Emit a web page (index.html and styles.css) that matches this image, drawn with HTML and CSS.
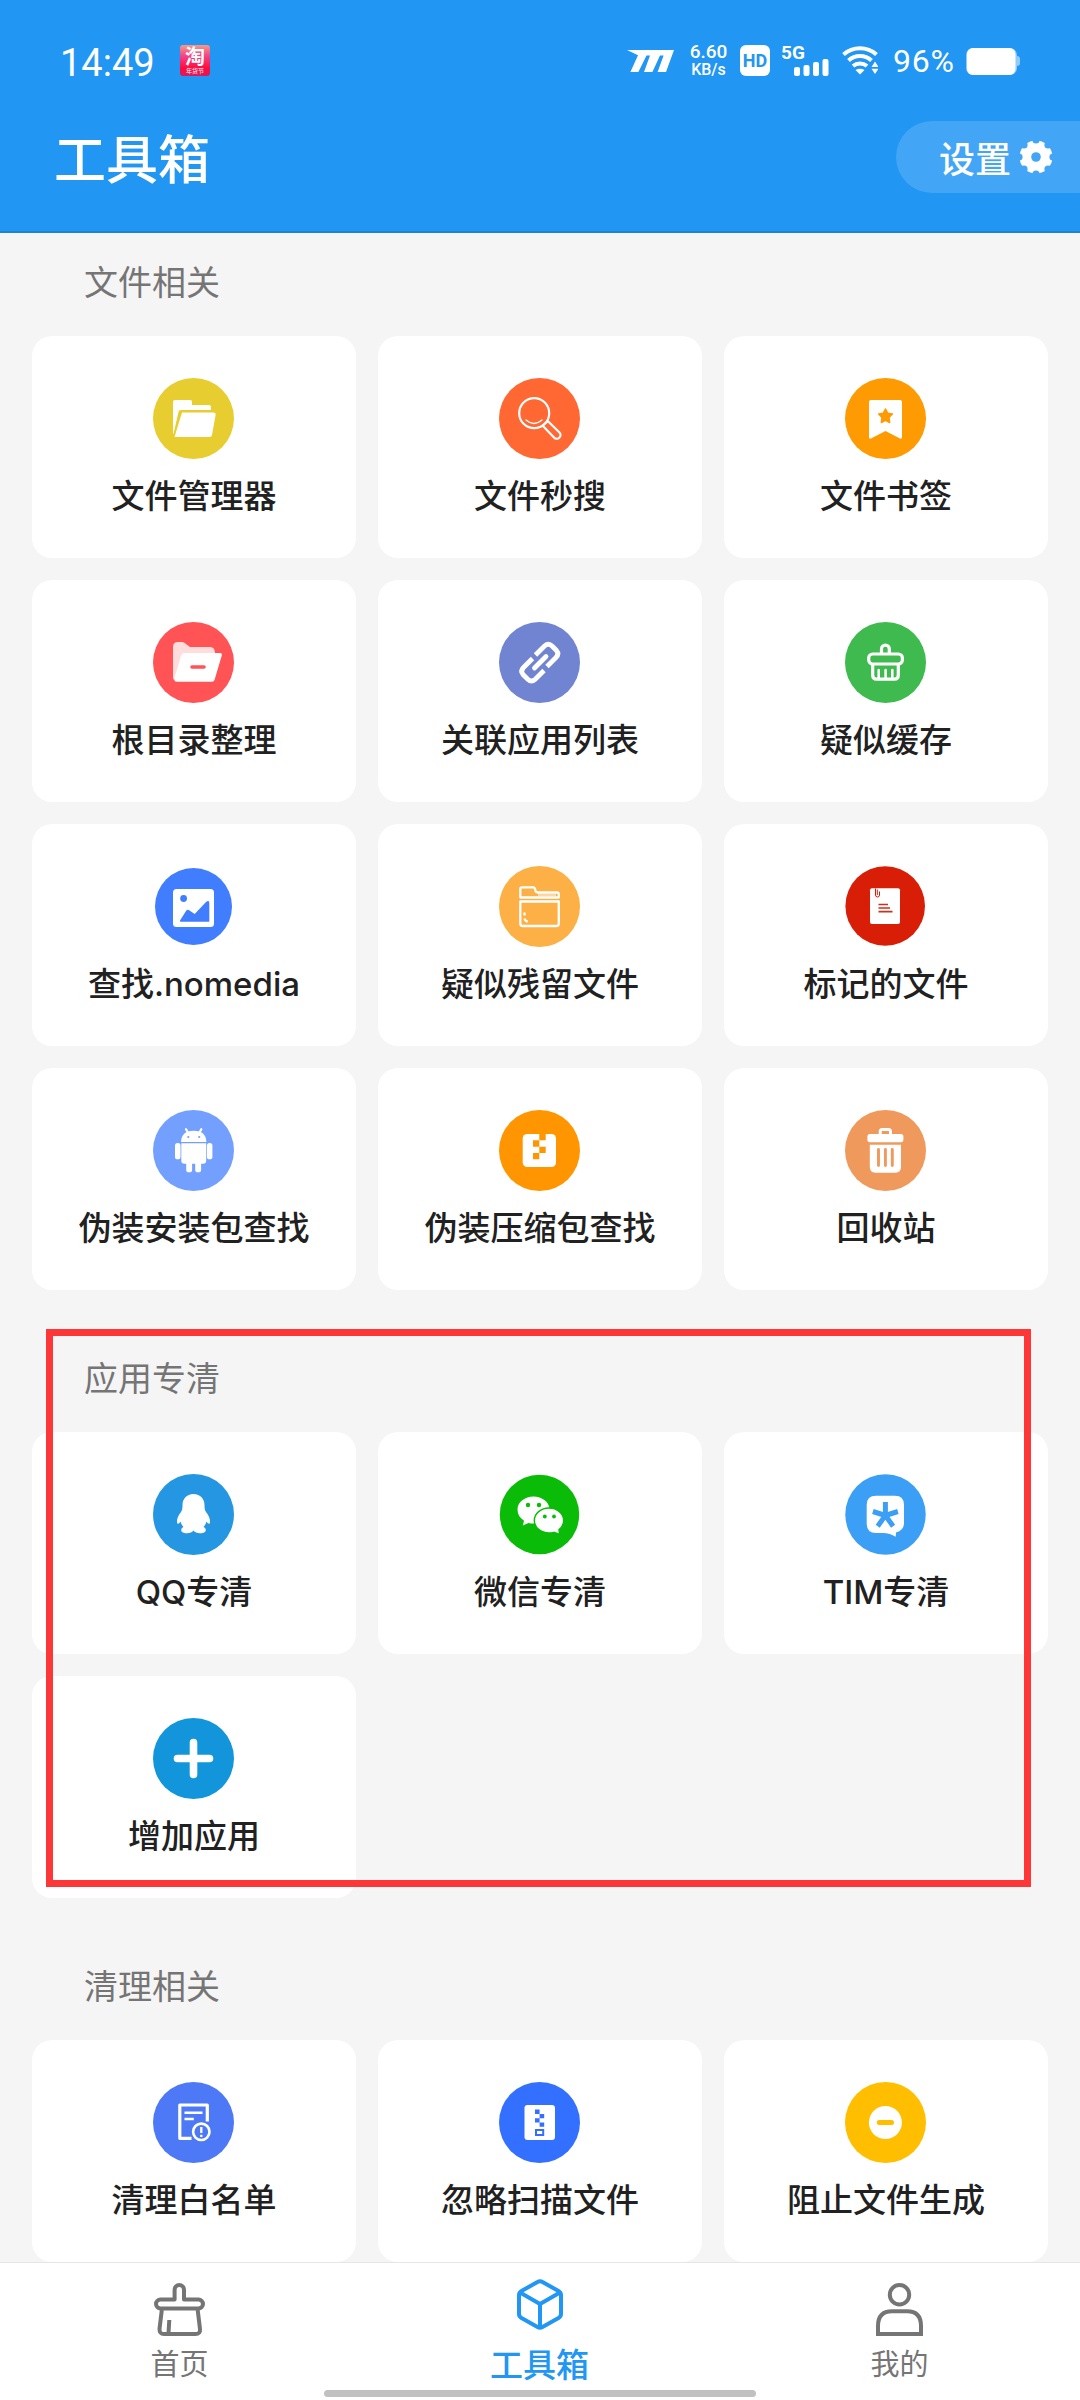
FILE: index.html
```html
<!DOCTYPE html>
<html lang="zh-CN">
  <head>
    <meta charset="UTF-8" />
    <meta name="viewport" content="width=device-width, initial-scale=1.0" />
    <title>工具箱</title>
    <link rel="stylesheet" href="styles.css">
  </head>
  <body>
    <header class="header">
      <div class="status">
        <span class="time">14:49</span>
        <span class="notice">
          <b>淘</b>
          <small>年货节</small>
        </span>
        <svg class="brand" width="47" height="22" viewBox="0 0 47 22">
          <path fill="#fff" d="M0 0H47L39 22H30.6L36.6 5.5H33L25.4 22H17L23 5.5H19.5L11.4 22H3.4L11 5.2Z" />
        </svg>
        <span class="speed"><span>6.60</span><span>KB/s</span></span>
        <span class="hd">HD</span>
        <span class="signal">
          <span class="net">5G</span>
          <svg width="35" height="17" viewBox="0 0 35 17">
            <g fill="#fff">
              <rect x="0" y="8" width="6" height="9" rx="2" />
              <rect x="9.5" y="6" width="6" height="11" rx="2" />
              <rect x="19" y="3" width="6" height="14" rx="2" />
              <rect x="28.5" y="0" width="6" height="17" rx="2" />
            </g>
          </svg>
        </span>
        <svg class="wifi" width="36" height="29" viewBox="0 0 36 29">
          <g fill="none" stroke="#fff" stroke-width="4">
            <path d="M1.5 8.5A25 25 0 0 1 34.5 8.5" />
            <path d="M6.5 14.5A17 17 0 0 1 29.5 14.5" />
            <path d="M11 20A11 11 0 0 1 25 20" />
          </g>
          <path fill="#fff" d="M13.5 24Q18 21.5 22.5 24L18 28.5Z" />
          <path fill="#2196f3" d="M28 16H36V29H28Z" />
          <path fill="#fff" d="M29.5 21L33 15.5L36.5 21ZM29.5 22.8L33 28L36.5 22.8Z" />
        </svg>
        <span class="percent">96%</span>
        <svg class="battery" width="54" height="27" viewBox="0 0 54 27">
          <rect x="47" y="8" width="7" height="10" rx="3" fill="#90cbf9" />
          <rect width="51" height="27" rx="7" fill="#90cbf9" />
          <rect x="1" width="48.5" height="27" rx="6" fill="#fff" />
        </svg>
      </div>
      <div class="title-bar">
        <h1>工具箱</h1>
        <button class="settings">
          设置
          <svg width="34" height="34" viewBox="0 0 34 34">
            <circle cx="17" cy="17" r="16.5" fill="#fff" />
            <g fill="#42a5f5">
              <circle cx="17" cy="17" r="4.8" />
              <circle cx="17" cy="0" r="3.6" />
              <circle cx="29" cy="5" r="3.6" />
              <circle cx="34" cy="17" r="3.6" />
              <circle cx="29" cy="29" r="3.6" />
              <circle cx="17" cy="34" r="3.6" />
              <circle cx="5" cy="29" r="3.6" />
              <circle cx="0" cy="17" r="3.6" />
              <circle cx="5" cy="5" r="3.6" />
            </g>
          </svg>
        </button>
      </div>
    </header>

    <main class="content">
      <section class="group">
        <h2>文件相关</h2>
        <div class="grid">
          <div class="card">
            <svg class="icon" viewBox="0 0 81 81">
              <circle cx="40.5" cy="40.5" r="40.5" fill="#e8cd30" />
              <path fill="#fff" d="M22 22H37.5Q39 22 39 24V27H56Q58 27 58 29V32H27.5Q26 32 25.5 34L20.5 56Q20 56 20 54V24Q20 22 22 22Z" />
              <path fill="#fff" d="M29 34.5H61Q63 34.5 62.6 37L59 57Q58.5 59 57 59H21.5Z" />
            </svg>
            <p>文件管理器</p>
          </div>
          <div class="card">
            <svg class="icon" viewBox="0 0 81 81">
              <circle cx="40.5" cy="40.5" r="40.5" fill="#ff6733" />
              <g fill="none" stroke="#fff" stroke-width="2.2" stroke-linecap="round">
                <circle cx="35.2" cy="35.2" r="15" />
                <path d="M27 42Q35 49 43 42" stroke-width="1.3" />
                <path d="M43.5 47.5L55 59.5A3.5 3.5 0 0 0 60.5 54.5L49 43.2Z" stroke-linejoin="round" />
              </g>
            </svg>
            <p>文件秒搜</p>
          </div>
          <div class="card">
            <svg class="icon" viewBox="0 0 81 81">
              <circle cx="40.5" cy="40.5" r="40.5" fill="#fe9a02" />
              <path fill="#fff" d="M26 22H55Q57 22 57 24V59Q57 61.5 55 60.5L40.5 53L26 60.5Q24 61.5 24 59V24Q24 22 26 22Z" />
              <path fill="#fe9a02" stroke="#fe9a02" stroke-width="1.5" stroke-linejoin="round" d="M40.5 31L42.7 35.2L47.3 36L44 39.5L44.7 44.5L40.5 42.3L36.3 44.5L37 39.5L33.7 36L38.3 35.2Z" />
            </svg>
            <p>文件书签</p>
          </div>
          <div class="card">
            <svg class="icon" viewBox="0 0 81 81">
              <circle cx="40.5" cy="40.5" r="40.5" fill="#ff5356" />
              <path fill="#ffdddd" d="M25 20H29Q31 20 33 22L37 25H57Q62 25 62 31V40L21 58Q20 57 20 55V25Q20 20 25 20Z" />
              <path fill="#fff" d="M31 31H67Q69.5 31 68.8 33.5L61.5 58Q61 59.7 59 59.7H24Q20.5 59.7 21.5 56L28 34Q29 31 31 31Z" />
              <path stroke="#ff5356" stroke-width="3.6" stroke-linecap="round" d="M39 45H51" />
            </svg>
            <p>根目录整理</p>
          </div>
          <div class="card">
            <svg class="icon" viewBox="0 0 81 81">
              <circle cx="40.5" cy="40.5" r="40.5" fill="#7184d2" />
              <g fill="none" stroke="#fff" stroke-width="4.8">
                <path d="M36.5 33L45.5 24Q49.5 20.5 53 24L57.5 28.5Q60.5 32 57 35.5L48 44.5" />
                <path d="M45 48.5L36 57.5Q32.5 60.5 29 57.5L24 52.5Q21 49 24.5 45.5L33.5 36.5" />
                <path d="M35.5 46L47 34.5" stroke-linecap="round" />
              </g>
            </svg>
            <p>关联应用列表</p>
          </div>
          <div class="card">
            <svg class="icon" viewBox="0 0 81 81">
              <circle cx="40.5" cy="40.5" r="40.5" fill="#3fba4e" />
              <g fill="none" stroke="#fff" stroke-width="3.2">
                <path d="M36.5 31V27A3.9 3.9 0 0 1 44.3 27V31" />
                <rect x="23.7" y="32" width="33.7" height="10" rx="4" />
                <path d="M27.7 43V53Q27.7 57.2 31.5 57.2H49.5Q53.3 57.2 53.3 53V43" />
                <path d="M33.7 48V56M40.6 48V56M47.3 48V56" stroke-width="2.6" stroke-linecap="round" />
              </g>
            </svg>
            <p>疑似缓存</p>
          </div>
          <div class="card">
            <svg class="icon" viewBox="0 0 81 81">
              <circle cx="40.5" cy="40.5" r="38.5" fill="#407eff" />
              <rect x="20" y="23" width="41" height="38" rx="3.5" fill="#fff" />
              <circle cx="30.6" cy="32.5" r="3.4" fill="#407eff" />
              <path fill="#407eff" d="M27 54.5L33 45Q34.5 43 36.5 44.5L41.7 48L53 36Q56.3 33.5 56.3 37V55.7H28Q26.5 55.7 27 54.5Z" />
            </svg>
            <p>查找.nomedia</p>
          </div>
          <div class="card">
            <svg class="icon" viewBox="0 0 81 81">
              <circle cx="40.5" cy="40.5" r="40.5" fill="#fcb045" />
              <g fill="none" stroke="#fff" stroke-width="2.3" stroke-linejoin="round">
                <path d="M21.3 31.5V23Q21.3 21.3 23 21.3H34Q36 21.3 36.3 24Q36.5 26.5 39 26.5H58Q59.8 26.5 59.8 28.5V31.5Z" />
                <path d="M39 29H57" stroke-width="1" />
                <path d="M21.3 35.5H59.8V57.5Q59.8 60 57.5 60H23.5Q21.3 60 21.3 57.5Z" />
                <path d="M25.5 46.5V49.5M25.5 52.5Q26 55 28.7 55.5" />
              </g>
            </svg>
            <p>疑似残留文件</p>
          </div>
          <div class="card">
            <svg class="icon" viewBox="0 0 81 81">
              <circle cx="40.2" cy="40" r="39.8" fill="#d81e06" />
              <rect x="25" y="22.3" width="30" height="35.7" rx="2" fill="#fff" />
              <path fill="none" stroke="#d81e06" stroke-width="1" d="M30.5 22.5V29A2 2 0 0 0 34.5 29V25.5M32.3 23.5V29" />
              <path stroke="#c8321f" stroke-width="1.7" d="M33.5 38.5H43M33.5 42H45M33.5 45.7H47.5" />
            </svg>
            <p>标记的文件</p>
          </div>
          <div class="card">
            <svg class="icon" viewBox="0 0 81 81">
              <circle cx="40.5" cy="40.5" r="40.5" fill="#73a0ff" />
              <g fill="#fff">
                <path d="M28 32Q28.5 20.7 40.7 20.7T53.4 32Z" />
                <path d="M28.3 33.2H53.2V50.5Q53.2 53.7 50 53.7H31.5Q28.3 53.7 28.3 50.5Z" />
                <rect x="22" y="33" width="5.5" height="16.3" rx="2.6" />
                <rect x="53.9" y="33" width="5.5" height="16.3" rx="2.6" />
                <rect x="33.2" y="48" width="5.9" height="14.3" rx="2.6" />
                <rect x="42.2" y="48" width="5.9" height="14.3" rx="2.6" />
              </g>
              <path stroke="#fff" stroke-width="2.2" stroke-linecap="round" d="M33 19.2L35 22.5M48.3 19.2L46.5 22.5" />
              <circle cx="35.3" cy="27" r="1.1" fill="#73a0ff" />
              <circle cx="46.2" cy="27" r="1.1" fill="#73a0ff" />
            </svg>
            <p>伪装安装包查找</p>
          </div>
          <div class="card">
            <svg class="icon" viewBox="0 0 81 81">
              <circle cx="40.5" cy="40.5" r="40.5" fill="#ff9601" />
              <rect x="23.7" y="24" width="33.3" height="33" rx="4.5" fill="#fff" />
              <path fill="#ff9601" d="M40.3 24H46.7V30.3H40.3ZM34 30.3H40.3V36.7H34ZM40.3 36.7H46.7V43H40.3ZM34 43H40.3V49.3H34Z" />
            </svg>
            <p>伪装压缩包查找</p>
          </div>
          <div class="card">
            <svg class="icon" viewBox="0 0 81 81">
              <circle cx="40.5" cy="40.5" r="40.5" fill="#f0995c" />
              <path fill="none" stroke="#fff" stroke-width="3" d="M35.2 25V21.5Q35.2 19.5 37.2 19.5H43.5Q45.5 19.5 45.5 21.5V25" />
              <rect x="22.4" y="24" width="36" height="8.3" rx="2.5" fill="#fff" />
              <path fill="#fff" d="M24.8 34.7H56V57Q56 62.7 50.5 62.7H30.3Q24.8 62.7 24.8 57Z" />
              <path stroke="#f0995c" stroke-width="2.9" stroke-linecap="round" d="M33.5 39.5V55.5M40.4 39.5V55.5M47.3 39.5V55.5" />
            </svg>
            <p>回收站</p>
          </div>
        </div>
      </section>

      <section class="group">
        <h2>应用专清</h2>
        <div class="grid">
          <div class="card">
            <svg class="icon" viewBox="0 0 81 81">
              <circle cx="40.5" cy="40.5" r="40.5" fill="#2496e2" />
              <path fill="#fff" d="M40.5 20C33.5 20 29.5 25 29.5 31C29.5 34 29.3 36 28 38C25 41.5 23.8 45 24 48.5C24.3 50.5 26 50 27.5 47.5C28.2 50 29 51.5 30.5 53C27.5 54 27.5 58 30.5 58.7C34 59.7 38.5 59.5 40.5 56.5C42.5 59.5 47 59.7 50.5 58.7C53.5 58 53.5 54 50.5 53C52 51.5 52.8 50 53.5 47.5C55 50 56.8 50.5 57 48.5C57.2 45 56 41.5 53 38C51.7 36 51.5 34 51.5 31C51.5 25 47.5 20 40.5 20Z" />
            </svg>
            <p>QQ专清</p>
          </div>
          <div class="card">
            <svg class="icon" viewBox="0 0 81 81">
              <circle cx="40.5" cy="40.5" r="39.7" fill="#0abb07" />
              <path fill="#fff" d="M18.5 35.5C18.5 28 26 22.5 34.5 22.5S50.5 28 50.5 35.5S43 49.5 34.5 49.5Q31.5 49.5 29.5 49L23.8 51.5L25 46.7Q18.5 42.5 18.5 35.5Z" />
              <path fill="#fff" stroke="#0abb07" stroke-width="1.4" d="M35.3 46.5C35.3 39.5 42 34 50 34S64.7 39.5 64.7 46.5Q64.7 52 60 55.5L60.5 60.5L55 58.3Q52.5 59 50 59C42 59 35.3 53.5 35.3 46.5Z" />
              <g fill="#0abb07">
                <circle cx="29" cy="31" r="2.2" />
                <circle cx="40" cy="31" r="2.2" />
                <circle cx="45.8" cy="42.5" r="1.9" />
                <circle cx="55" cy="42.5" r="1.9" />
              </g>
            </svg>
            <p>微信专清</p>
          </div>
          <div class="card">
            <svg class="icon" viewBox="0 0 81 81">
              <circle cx="40.5" cy="40.5" r="40.2" fill="#3b9ff5" />
              <path fill="#fff" d="M31 21.8H50Q59 21.8 59 31V49Q59 56.5 51 58.5L50.7 62.8Q45 59 38 59H31Q21.7 59 21.7 49.5V31Q21.7 21.8 31 21.8Z" />
              <path stroke="#3b9ff5" stroke-width="5" d="M40.4 41.5V28M40.4 41.5L27.9 37.5M40.4 41.5L52.9 37.5M40.4 41.5L32.7 52.2M40.4 41.5L48.1 52.2" />
            </svg>
            <p>TIM专清</p>
          </div>
          <div class="card">
            <svg class="icon" viewBox="0 0 81 81">
              <circle cx="40.5" cy="40.5" r="40.5" fill="#1295db" />
              <path stroke="#fff" stroke-width="7.6" stroke-linecap="round" d="M24.5 40.5H56.5M40.5 24.5V56.5" />
            </svg>
            <p>增加应用</p>
          </div>
        </div>
        <div class="highlight"></div>
      </section>

      <section class="group">
        <h2>清理相关</h2>
        <div class="grid">
          <div class="card">
            <svg class="icon" viewBox="0 0 81 81">
              <circle cx="40.5" cy="40.5" r="40.5" fill="#4e79f6" />
              <g fill="none" stroke="#fff" stroke-width="3.2">
                <path d="M54.3 39.5V23H26.8V56.3H38.5" stroke-linejoin="round" />
                <path d="M31.5 30.7H49.5M31.5 37H40.8" stroke-width="2.6" />
                <circle cx="48.3" cy="49.8" r="8.2" stroke-width="2.6" />
                <path d="M48.3 45V51M48.3 52.8V55" stroke-width="2.3" />
              </g>
            </svg>
            <p>清理白名单</p>
          </div>
          <div class="card">
            <svg class="icon" viewBox="0 0 81 81">
              <circle cx="40.5" cy="40.5" r="40.5" fill="#3370ff" />
              <rect x="25.5" y="23" width="30.5" height="35" rx="3" fill="#fff" />
              <path fill="#3370ff" d="M36 27.5H40.6V32H36ZM40.6 32H45.2V36.3H40.6ZM36 36.3H40.6V40.6H36ZM40.6 40.6H45.2V44.8H40.6Z" />
              <rect x="37" y="48" width="7.2" height="5" fill="none" stroke="#3370ff" stroke-width="2" />
            </svg>
            <p>忽略扫描文件</p>
          </div>
          <div class="card">
            <svg class="icon" viewBox="0 0 81 81">
              <circle cx="40.5" cy="40.5" r="40.5" fill="#ffbf00" />
              <circle cx="40.4" cy="40.5" r="16.5" fill="#fff" />
              <path stroke="#ffbf00" stroke-width="5" stroke-linecap="round" d="M34.3 40.5H46.5" />
            </svg>
            <p>阻止文件生成</p>
          </div>
        </div>
      </section>
    </main>

    <nav class="tabs">
      <a class="tab">
        <svg width="51" height="53" viewBox="0 0 51 53" fill="none" stroke="#757575" stroke-width="4">
          <path d="M20.6 16.5V7A4.7 5 0 0 1 30 7V16.5H44.5A4.5 4.5 0 0 1 44.5 25.5H6.5A4.5 4.5 0 0 1 6.5 16.5Z" stroke-linejoin="round" />
          <path d="M7.8 27L5.5 46Q5.3 51 10 51H41.5Q46.5 51 46 46L43.7 27M15.3 37L14.5 50" />
        </svg>
        <span>首页</span>
      </a>
      <a class="tab active">
        <svg width="46" height="51" viewBox="0 0 46 51" fill="none" stroke="#2196f3" stroke-width="4" stroke-linejoin="round">
          <path d="M20.5 3Q23 1.5 25.5 3L41.5 12Q44 13.5 44 16V35Q44 37.5 41.5 39L25.5 48Q23 49.5 20.5 48L4.5 39Q2 37.5 2 35V16Q2 13.5 4.5 12Z" />
          <path d="M3 13.5L23 25L43 13.5M23 25V48.5" />
        </svg>
        <span>工具箱</span>
      </a>
      <a class="tab">
        <svg width="47" height="53" viewBox="0 0 47 53" fill="none" stroke="#757575" stroke-width="4">
          <circle cx="23.5" cy="11.7" r="9.7" />
          <path d="M2 51V43Q2 28.3 16 28.3H31Q45 28.3 45 43V51Z" />
        </svg>
        <span>我的</span>
      </a>
      <div class="home-bar"></div>
    </nav>
  </body>
</html>
```
FILE: styles.css
```css
* {
  box-sizing: border-box;
}
body {
  display: flex;
  flex-direction: column;
  width: 1080px;
  height: 2400px;
  margin: 0;
  overflow: hidden;
  background-color: #f5f5f5;
  color: #212121;
  font-family: Inter, "Noto Sans CJK SC", sans-serif;
}
h1,
h2,
p {
  margin: 0;
}
svg {
  display: block;
  flex-shrink: 0;
}

/* header */
.header {
  flex-shrink: 0;
  height: 233px;
  background-color: #2196f3;
  border-bottom: 2px solid #1e82d2;
  color: #fff;
}
.status {
  display: flex;
  align-items: center;
  height: 121px;
  padding-left: 60px;
  font-family: Roboto, sans-serif;
}
.time {
  width: 120px;
  font-size: 38px;
  line-height: 40px;
  padding-top: 4px;
}
.notice {
  display: flex;
  flex-direction: column;
  align-items: center;
  width: 30px;
  height: 31px;
  border-radius: 3px;
  background: linear-gradient(#f79a86, #f0468a 35%, #ff0a3c 75%, #d81b60);
  font-family: "Noto Sans CJK SC", sans-serif;
}
.notice b {
  font-size: 20px;
  line-height: 22px;
}
.notice small {
  font-size: 6px;
  line-height: 7px;
}
.brand {
  margin-left: 417px;
}
.speed {
  display: flex;
  flex-direction: column;
  align-items: center;
  width: 39px;
  margin-left: 15px;
  font-size: 16px;
  font-weight: 500;
  line-height: 18px;
}
.speed span:first-child {
  font-size: 19px;
}
.hd {
  width: 30px;
  height: 31px;
  margin-left: 12px;
  border-radius: 6px;
  background-color: #fff;
  color: #2196f3;
  font-size: 18px;
  font-weight: 700;
  line-height: 32px;
  text-align: center;
}
.signal {
  display: flex;
  flex-direction: column;
  align-items: flex-end;
  width: 48px;
  height: 31px;
  margin-left: 11px;
}
.net {
  align-self: flex-start;
  height: 14px;
  font-size: 19px;
  font-weight: 700;
  line-height: 16px;
}
.wifi {
  margin-left: 13px;
}
.percent {
  width: 64px;
  margin-left: 15px;
  font-size: 32px;
  letter-spacing: 0.8px;
  line-height: 40px;
}
.battery {
  margin-left: 9px;
  margin-top: 2px;
}
.title-bar {
  display: flex;
  align-items: flex-start;
  justify-content: space-between;
  padding-left: 54px;
}
.title-bar h1 {
  font-size: 52px;
  font-weight: 500;
  line-height: 80px;
}
.settings {
  display: flex;
  align-items: center;
  gap: 8px;
  width: 184px;
  height: 72px;
  padding: 0 0 0 43px;
  border: none;
  border-radius: 36px 0 0 36px;
  background-color: #42a5f5;
  color: #fff;
  font-family: inherit;
  font-size: 36px;
  font-weight: 500;
}

/* tool groups */
.content {
  flex: 1;
  overflow: hidden;
  padding: 0 32px;
}
.group {
  position: relative;
  margin-bottom: 39px;
}
.group h2 {
  height: 103px;
  padding-left: 52px;
  color: #757575;
  font-size: 34px;
  font-weight: 400;
  line-height: 100px;
}
.grid {
  display: grid;
  grid-template-columns: repeat(3, 324px);
  gap: 22px;
}
.card {
  display: flex;
  flex-direction: column;
  align-items: center;
  height: 222px;
  padding-top: 42px;
  border-radius: 20px;
  background-color: #fff;
}
.icon {
  width: 81px;
  height: 81px;
  margin-right: 1px;
}
.card p {
  margin-top: 13px;
  font-size: 33px;
  font-weight: 500;
  line-height: 48px;
}
.highlight {
  position: absolute;
  top: 0;
  left: 14px;
  width: 985px;
  height: 558px;
  border: 7px solid #fd3737;
}

/* bottom tabs */
.tabs {
  position: relative;
  display: flex;
  flex-shrink: 0;
  height: 138px;
  border-top: 1px solid #e6e6e6;
  background-color: #fff;
}
.tab {
  display: flex;
  flex: 1;
  flex-direction: column;
  align-items: center;
  justify-content: flex-end;
  gap: 9px;
  padding: 0 1px 15px 0;
  color: #757575;
  font-size: 29px;
  line-height: 40px;
}
.tab.active {
  gap: 15px;
  color: #2196f3;
  font-size: 33px;
  font-weight: 500;
}
.home-bar {
  position: absolute;
  bottom: 3px;
  left: 324px;
  width: 432px;
  height: 7px;
  border-radius: 4px;
  background-color: #c1c1c1;
}
```
